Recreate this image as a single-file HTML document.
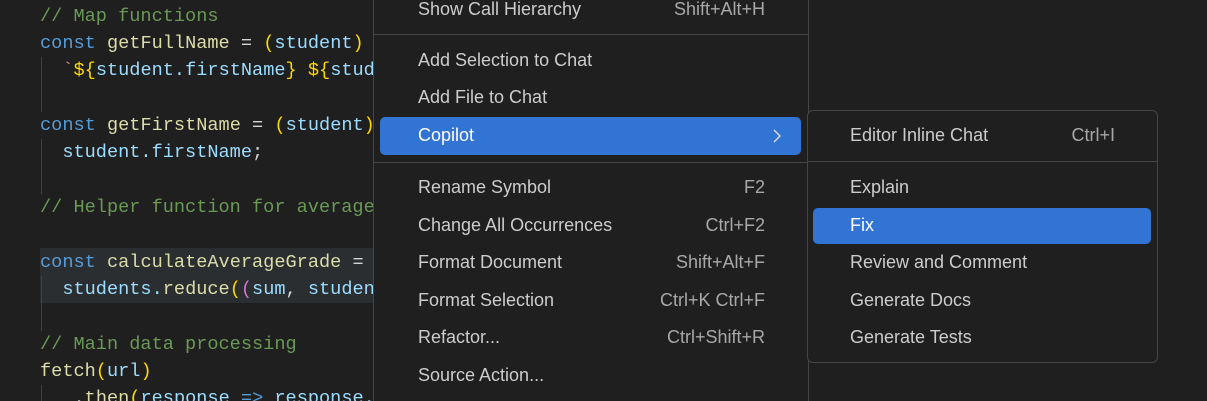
<!DOCTYPE html>
<html style="overflow:hidden;height:401px"><head><style>
body{margin:0;width:1207px;height:401px;background:#1f1f1f;overflow:hidden;position:relative;font-family:"Liberation Sans",sans-serif}
.code{position:absolute;left:0;top:2px;font-family:"Liberation Mono",monospace;font-size:18.6px;color:#9cdcfe;white-space:pre}
.ln{position:absolute;left:40px;height:27px;line-height:27px}
.k{color:#569cd6}.f{color:#dcdcaa}.c{color:#6a9955}.p{color:#ffd700}.s{color:#ce9178}.m{color:#da70d6}.w{color:#d4d4d4}
.hl{position:absolute;left:40px;top:248px;width:335px;height:55px;background:#2b2e31}
.g{position:absolute;left:41px;width:1px;background:#404040}
.menu{position:absolute;background:#1f1f1f;border:1px solid #454545;color:#cccccc;font-size:18px;overflow:hidden}
.it{position:absolute;height:37px;line-height:37px}
.sc{position:absolute;height:37px;line-height:37px;color:#a8a8a8;text-align:right}
.sep{position:absolute;height:1px;background:#454545}
.sel{position:absolute;background:#3174d3;border-radius:5px}
</style></head><body>
<div class="hl"></div>
<div class="g" style="top:57px;height:55px"></div>
<div class="g" style="top:139px;height:55px"></div>
<div class="g" style="top:276px;height:55px"></div>
<div class="g" style="top:385px;height:16px"></div>
<div class="code">
<div class="ln c" style="top:1px">// Map functions</div>
<div class="ln" style="top:28px"><span class="k">const</span> <span class="f">getFullName</span> <span class="w">=</span> <span class="p">(</span>student<span class="p">)</span></div>
<div class="ln" style="top:55px">  <span class="s">`</span><span class="p">${</span>student.firstName<span class="p">}</span><span class="s"> </span><span class="p">${</span>stud</div>
<div class="ln" style="top:110px"><span class="k">const</span> <span class="f">getFirstName</span> <span class="w">=</span> <span class="p">(</span>student<span class="p">)</span></div>
<div class="ln" style="top:137px">  student.firstName<span class="w">;</span></div>
<div class="ln c" style="top:192px">// Helper function for average</div>
<div class="ln" style="top:247px"><span class="k">const</span> <span class="f">calculateAverageGrade</span> <span class="w">=</span></div>
<div class="ln" style="top:274px">  students.<span class="f">reduce</span><span class="p">(</span><span class="m">(</span>sum<span class="w">,</span> studen</div>
<div class="ln c" style="top:329px">// Main data processing</div>
<div class="ln" style="top:356px"><span class="f">fetch</span><span class="p">(</span>url<span class="p">)</span></div>
<div class="ln" style="top:383px">   <span class="w">.</span><span class="f">then</span><span class="p">(</span>response <span class="k">=&gt;</span> response.j</div>
</div>

<div class="menu" style="left:373px;top:-10px;width:434px;height:420px;border-radius:6px">
<div class="it" style="left:44px;top:0px">Show Call Hierarchy</div><div class="sc" style="right:43px;top:0px">Shift+Alt+H</div>
<div class="sep" style="left:0;right:0;top:43px"></div>
<div class="it" style="left:44px;top:51px">Add Selection to Chat</div>
<div class="it" style="left:44px;top:88px">Add File to Chat</div>
<div class="sel" style="left:6px;top:126px;width:421px;height:38px"></div>
<div class="it" style="left:44px;top:126px;color:#fff">Copilot</div>
<svg style="position:absolute;left:397px;top:138px" width="12" height="14" viewBox="0 0 12 14"><path d="M3 1 L9 7 L3 13" fill="none" stroke="#dde" stroke-width="1.4"/></svg>
<div class="sep" style="left:0;right:0;top:171px"></div>
<div class="it" style="left:44px;top:178px">Rename Symbol</div><div class="sc" style="right:43px;top:178px">F2</div>
<div class="it" style="left:44px;top:216px">Change All Occurrences</div><div class="sc" style="right:43px;top:216px">Ctrl+F2</div>
<div class="it" style="left:44px;top:253px">Format Document</div><div class="sc" style="right:43px;top:253px">Shift+Alt+F</div>
<div class="it" style="left:44px;top:291px">Format Selection</div><div class="sc" style="right:43px;top:291px">Ctrl+K Ctrl+F</div>
<div class="it" style="left:44px;top:328px">Refactor...</div><div class="sc" style="right:43px;top:328px">Ctrl+Shift+R</div>
<div class="it" style="left:44px;top:366px">Source Action...</div>
</div>

<div class="menu" style="left:807px;top:110px;width:349px;height:251px;border-radius:6px">
<div class="it" style="left:42px;top:6px">Editor Inline Chat</div><div class="sc" style="right:42px;top:6px">Ctrl+I</div>
<div class="sep" style="left:0;right:0;top:50px"></div>
<div class="it" style="left:42px;top:58px">Explain</div>
<div class="sel" style="left:5px;top:97px;width:338px;height:36px"></div>
<div class="it" style="left:42px;top:96px;color:#fff">Fix</div>
<div class="it" style="left:42px;top:133px">Review and Comment</div>
<div class="it" style="left:42px;top:171px">Generate Docs</div>
<div class="it" style="left:42px;top:208px">Generate Tests</div>
</div>
</body></html>
